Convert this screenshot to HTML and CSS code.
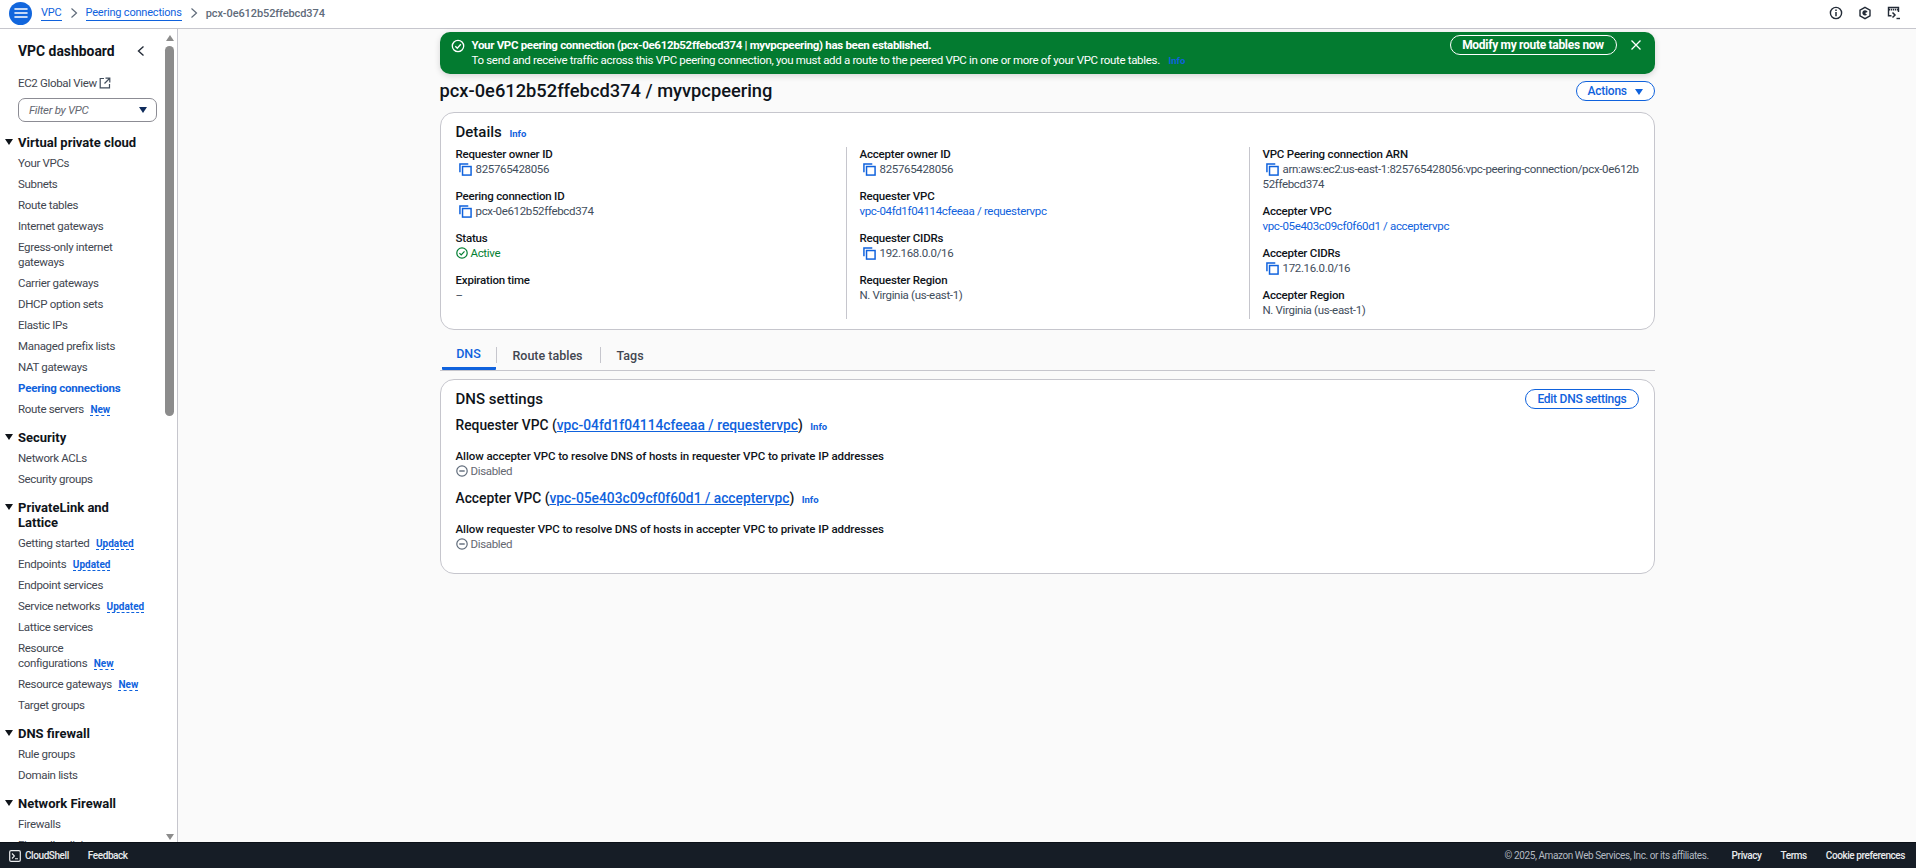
FILE: index.html
```html
<!DOCTYPE html>
<html lang="en">
<head>
<meta charset="utf-8">
<title>pcx-0e612b52ffebcd374 | VPC</title>
<link rel="stylesheet" href="styles.css">
</head>
<body>
<svg class="defs" width="0" height="0" aria-hidden="true">
  <symbol id="copy" viewBox="0 0 14 14"><path d="M1 10V1h9" fill="none" stroke="#0f62dd" stroke-width="1.6"/><rect x="3.8" y="3.8" width="9.2" height="9.2" fill="none" stroke="#0f62dd" stroke-width="1.6"/></symbol>
  <symbol id="minus" viewBox="0 0 12 12"><circle cx="6" cy="6" r="5.2" fill="none" stroke="#5f6b7a" stroke-width="1.2"/><path d="M3.3 6h5.4" stroke="#5f6b7a" stroke-width="1.4"/></symbol>
</svg>
<header class="topbar">
  <button class="menu-btn" aria-label="Menu"><svg viewBox="0 0 14 12" width="14" height="12"><path d="M1 2h12M1 6h12M1 10h12" stroke="#fff" stroke-width="1.6" stroke-linecap="round"/></svg></button>
  <nav class="crumbs">
    <a class="crumb-link" href="#">VPC</a>
    <svg class="crumb-sep" viewBox="0 0 8 12" width="8" height="12"><path d="M1.5 1.5 6.5 6l-5 4.5" fill="none" stroke="#5f6b7a" stroke-width="1.2"/></svg>
    <a class="crumb-link" href="#">Peering connections</a>
    <svg class="crumb-sep" viewBox="0 0 8 12" width="8" height="12"><path d="M1.5 1.5 6.5 6l-5 4.5" fill="none" stroke="#5f6b7a" stroke-width="1.2"/></svg>
    <span class="crumb-current">pcx-0e612b52ffebcd374</span>
  </nav>
  <div class="top-icons">
    <svg viewBox="0 0 14 14" width="14" height="14"><circle cx="7" cy="7" r="5.6" fill="none" stroke="#232b37" stroke-width="1.4"/><path d="M7 6v4.2M7 3.4v1.5" stroke="#232b37" stroke-width="1.5"/></svg>
    <svg viewBox="0 0 14 14" width="14" height="14"><path d="M7 1.4 12 4.2v5.6L7 12.6 2 9.8V4.2Z" fill="none" stroke="#232b37" stroke-width="1.4"/><path d="M7 7 9.6 6A2.7 2.7 0 1 0 9 8.8Z" fill="#232b37"/></svg>
    <svg viewBox="0 0 14 14" width="14" height="14"><path d="M4.5 9.8H1.5V1.5h10V6" fill="none" stroke="#232b37" stroke-width="1.4"/><path d="M2 3.6h9" stroke="#232b37" stroke-width="1.6" stroke-dasharray="1.3 .7"/><path d="M5.5 6.5 8 9l-2.5 2.5" fill="none" stroke="#232b37" stroke-width="1.5"/><path d="M9.5 12.5H13" stroke="#232b37" stroke-width="1.4"/></svg>
  </div>
</header>
<div class="shell">
  <aside class="sidebar">
    <div class="side-inner">
      <div class="side-head">
        <h2 class="side-title">VPC dashboard</h2>
        <svg viewBox="0 0 8 12" width="8" height="12"><path d="M6.5 1.5 1.5 6l5 4.5" fill="none" stroke="#232b37" stroke-width="1.4"/></svg>
      </div>
      <a class="side-link global" href="#">EC2 Global View <svg viewBox="0 0 12 12" width="12" height="12"><path d="M5 1.5H1.2v9.3h9.3V7" fill="none" stroke="#414d5c" stroke-width="1.2"/><path d="M6.5 1.2h4.3v4.3M10.5 1.5 5.5 6.5" fill="none" stroke="#414d5c" stroke-width="1.2"/></svg></a>
      <div class="filter"><span>Filter by VPC</span><i class="caret navy"></i></div>

      <h3 class="sec"><i class="caret dark"></i>Virtual private cloud</h3>
      <a class="side-link" href="#">Your VPCs</a>
      <a class="side-link" href="#">Subnets</a>
      <a class="side-link" href="#">Route tables</a>
      <a class="side-link" href="#">Internet gateways</a>
      <a class="side-link" href="#">Egress-only internet<br>gateways</a>
      <a class="side-link" href="#">Carrier gateways</a>
      <a class="side-link" href="#">DHCP option sets</a>
      <a class="side-link" href="#">Elastic IPs</a>
      <a class="side-link" href="#">Managed prefix lists</a>
      <a class="side-link" href="#">NAT gateways</a>
      <a class="side-link active" href="#">Peering connections</a>
      <a class="side-link" href="#">Route servers <b class="tag">New</b></a>

      <h3 class="sec"><i class="caret dark"></i>Security</h3>
      <a class="side-link" href="#">Network ACLs</a>
      <a class="side-link" href="#">Security groups</a>

      <h3 class="sec"><i class="caret dark"></i>PrivateLink and<br>Lattice</h3>
      <a class="side-link" href="#">Getting started <b class="tag">Updated</b></a>
      <a class="side-link" href="#">Endpoints <b class="tag">Updated</b></a>
      <a class="side-link" href="#">Endpoint services</a>
      <a class="side-link" href="#">Service networks <b class="tag">Updated</b></a>
      <a class="side-link" href="#">Lattice services</a>
      <a class="side-link" href="#">Resource<br>configurations <b class="tag">New</b></a>
      <a class="side-link" href="#">Resource gateways <b class="tag">New</b></a>
      <a class="side-link" href="#">Target groups</a>

      <h3 class="sec"><i class="caret dark"></i>DNS firewall</h3>
      <a class="side-link" href="#">Rule groups</a>
      <a class="side-link" href="#">Domain lists</a>

      <h3 class="sec"><i class="caret dark"></i>Network Firewall</h3>
      <a class="side-link" href="#">Firewalls</a>
      <a class="side-link" href="#">Firewall policies</a>
    </div>
    <div class="scrollbar">
      <i class="sb-arrow up"></i>
      <div class="sb-thumb"></div>
      <i class="sb-arrow down"></i>
    </div>
  </aside>
  <main class="main">
    <div class="content">
      <section class="banner">
        <svg class="banner-icon" viewBox="0 0 14 14" width="14" height="14"><circle cx="7" cy="7" r="5.7" fill="none" stroke="#fff" stroke-width="1.3"/><path d="M4.3 7.2 6.3 9.2 9.8 5.2" fill="none" stroke="#fff" stroke-width="1.3"/></svg>
        <div class="banner-text">
          <strong>Your VPC peering connection (pcx-0e612b52ffebcd374 | myvpcpeering) has been established.</strong>
          <span>To send and receive traffic across this VPC peering connection, you must add a route to the peered VPC in one or more of your VPC route tables. <a class="info banner-info" href="#">Info</a></span>
        </div>
        <button class="banner-btn">Modify my route tables now</button>
        <svg class="banner-close" viewBox="0 0 12 12" width="12" height="12"><path d="M1.5 1.5l9 9M10.5 1.5l-9 9" stroke="#fff" stroke-width="1.3"/></svg>
      </section>

      <div class="title-row">
        <h1 class="page-title">pcx-0e612b52ffebcd374 / myvpcpeering</h1>
        <button class="btn">Actions <i class="caret blue"></i></button>
      </div>

      <section class="card details">
        <h2 class="card-title">Details <a class="info" href="#">Info</a></h2>
        <div class="cols">
          <div class="col">
            <dl class="kv"><dt>Requester owner ID</dt><dd><svg class="copy"><use href="#copy"/></svg>825765428056</dd></dl>
            <dl class="kv"><dt>Peering connection ID</dt><dd><svg class="copy"><use href="#copy"/></svg>pcx-0e612b52ffebcd374</dd></dl>
            <dl class="kv"><dt>Status</dt><dd class="ok"><svg class="status-icon" viewBox="0 0 12 12"><circle cx="6" cy="6" r="5.2" fill="none" stroke="#037f33" stroke-width="1.2"/><path d="M3.4 6.2 5.2 8l3.3-3.7" fill="none" stroke="#037f33" stroke-width="1.2"/></svg>Active</dd></dl>
            <dl class="kv"><dt>Expiration time</dt><dd>–</dd></dl>
          </div>
          <div class="col ruled">
            <dl class="kv"><dt>Accepter owner ID</dt><dd><svg class="copy"><use href="#copy"/></svg>825765428056</dd></dl>
            <dl class="kv"><dt>Requester VPC</dt><dd><a class="link" href="#">vpc-04fd1f04114cfeeaa / requestervpc</a></dd></dl>
            <dl class="kv"><dt>Requester CIDRs</dt><dd><svg class="copy"><use href="#copy"/></svg>192.168.0.0/16</dd></dl>
            <dl class="kv"><dt>Requester Region</dt><dd>N. Virginia (us-east-1)</dd></dl>
          </div>
          <div class="col ruled">
            <dl class="kv"><dt>VPC Peering connection ARN</dt><dd><svg class="copy"><use href="#copy"/></svg>arn:aws:ec2:us-east-1:825765428056:vpc-peering-connection/pcx-0e612b<br>52ffebcd374</dd></dl>
            <dl class="kv"><dt>Accepter VPC</dt><dd><a class="link" href="#">vpc-05e403c09cf0f60d1 / acceptervpc</a></dd></dl>
            <dl class="kv"><dt>Accepter CIDRs</dt><dd><svg class="copy"><use href="#copy"/></svg>172.16.0.0/16</dd></dl>
            <dl class="kv"><dt>Accepter Region</dt><dd>N. Virginia (us-east-1)</dd></dl>
          </div>
        </div>
      </section>

      <div class="tabs">
        <a class="tab on" href="#">DNS</a>
        <a class="tab" href="#">Route tables</a>
        <a class="tab last" href="#">Tags</a>
      </div>

      <section class="card dns">
        <div class="dns-head">
          <h2 class="card-title">DNS settings</h2>
          <button class="btn">Edit DNS settings</button>
        </div>
        <h3 class="dns-sub">Requester VPC (<a href="#">vpc-04fd1f04114cfeeaa / requestervpc</a>) <a class="info" href="#">Info</a></h3>
        <dl class="kv dns-kv"><dt>Allow accepter VPC to resolve DNS of hosts in requester VPC to private IP addresses</dt><dd class="off"><svg class="status-icon"><use href="#minus"/></svg>Disabled</dd></dl>
        <h3 class="dns-sub">Accepter VPC (<a href="#">vpc-05e403c09cf0f60d1 / acceptervpc</a>) <a class="info" href="#">Info</a></h3>
        <dl class="kv dns-kv"><dt>Allow requester VPC to resolve DNS of hosts in accepter VPC to private IP addresses</dt><dd class="off"><svg class="status-icon"><use href="#minus"/></svg>Disabled</dd></dl>
      </section>
    </div>
  </main>
</div>
<footer class="footer">
  <svg viewBox="0 0 12 12" width="12" height="12"><rect x=".7" y=".7" width="10.6" height="10.6" rx="1.4" fill="none" stroke="#e9ebed" stroke-width="1.2"/><path d="M3 3.5 5.4 6 3 8.5M6 8.8h3" fill="none" stroke="#e9ebed" stroke-width="1.1"/></svg>
  <a class="foot-link cloud" href="#">CloudShell</a>
  <a class="foot-link" href="#">Feedback</a>
  <span class="copyright">© 2025, Amazon Web Services, Inc. or its affiliates.</span>
  <a class="foot-link" href="#">Privacy</a>
  <a class="foot-link" href="#">Terms</a>
  <a class="foot-link" href="#">Cookie preferences</a>
</footer>
</body>
</html>
```
FILE: styles.css
```css
* { box-sizing: border-box; }
html, body { height: 100%; }
body {
  margin: 0;
  height: 868px;
  overflow: hidden;
  display: flex;
  flex-direction: column;
  background: #fafafa;
  color: #0f141a;
  font: 11.5px/15px Roboto, "Liberation Sans", sans-serif;
}
a { text-decoration: none; color: inherit; }
h1, h2, h3, dl, dd { margin: 0; }
button { font: inherit; cursor: pointer; }
.defs { position: absolute; }

/* top bar */
.topbar {
  flex: none;
  height: 29px;
  display: flex;
  align-items: center;
  background: #fff;
  border-bottom: 1px solid #c6c6cd;
  padding: 0 15px 2px 9px;
}
.menu-btn {
  width: 23px; height: 23px;
  padding: 0;
  border: 0;
  border-radius: 50%;
  background: #1166dd;
  display: flex; align-items: center; justify-content: center;
}
.crumbs { display: flex; align-items: center; margin-left: 9px; gap: 8px; font-size: 11px; }
.crumb-link { color: #0f62dd; border-bottom: 1px solid #0f62dd; line-height: 15px; letter-spacing: -.2px; }
.crumb-current { color: #5f6b7a; font-weight: 500; letter-spacing: -.1px; }
.top-icons { margin-left: auto; display: flex; gap: 15px; }

/* layout */
.shell { flex: 1; min-height: 0; display: flex; }

/* sidebar */
.sidebar {
  flex: none;
  width: 178px;
  display: flex;
  background: #fff;
  border-right: 1px solid #c6c6cd;
  overflow: hidden;
}
.side-inner { flex: 1; min-width: 0; padding: 0 0 0 18px; overflow: hidden; }
.side-head { display: flex; align-items: center; justify-content: space-between; padding: 0 20px 0 0; height: 44px; }
.side-title { font-size: 13.9px; line-height: 18px; font-weight: 700; color: #0f141a; }
.side-link { display: block; padding: 3px 0; line-height: 15px; color: #424650; font-size: 11.5px; letter-spacing: -.33px; white-space: nowrap; }
.side-link.global svg { vertical-align: -2px; }
.side-link.active { color: #0f62dd; font-weight: 700; letter-spacing: -.2px; }
.tag {
  margin-left: 4px;
  font-size: 10px;
  line-height: 10px;
  font-weight: 700;
  letter-spacing: 0;
  color: #0f62dd;
  border-bottom: 1px dashed #0f62dd;
}
.filter {
  width: 139px;
  height: 24px;
  margin-top: 4px;
  padding: 0 9px 0 10px;
  border: 1px solid #8c8c94;
  border-radius: 7px;
  display: flex; align-items: center; justify-content: space-between;
  font-style: italic;
  letter-spacing: -.3px;
  color: #656871;
}
.caret { display: inline-block; width: 0; height: 0; border-style: solid; border-width: 5px 4px 0; border-color: transparent; }
.caret.navy { border-top-color: #0f2c5c; border-width: 6px 4px 0; }
.caret.dark { border-top-color: #0f141a; }
.caret.blue { border-top-color: #0f62dd; }
.sec {
  position: relative;
  margin-top: 7px;
  padding: 3px 0;
  font-size: 13px;
  line-height: 15px;
  font-weight: 700;
  color: #0f141a;
}
.sec .caret { position: absolute; left: -13px; top: 7px; border-width: 6px 4px 0; }
.filter + .sec { margin-top: 10px; }
.scrollbar {
  flex: none;
  width: 12px;
  padding: 6px 3px 0 0;
  display: flex;
  flex-direction: column;
  align-items: center;
  background: #fff;
}
.sb-thumb { width: 9px; height: 370px; margin-top: 5px; border-radius: 5px; background: #8c8c8c; }
.sb-arrow { width: 0; height: 0; border-left: 4.5px solid transparent; border-right: 4.5px solid transparent; }
.sb-arrow.up { border-bottom: 6px solid #8c8c8c; }
.sb-arrow.down { margin-top: auto; margin-bottom: 2px; border-top: 6px solid #8c8c8c; }

/* main */
.main { flex: 1; min-width: 0; padding-top: 3px; }
.content { width: 1215px; margin: 0 auto; }

.banner {
  height: 42px;
  display: flex;
  align-items: flex-start;
  padding: 6px 13px 0 11px;
  border-radius: 10px;
  background: #037b30;
  box-shadow: 0 2px 6px rgba(0,0,0,.15);
  color: #fff;
  letter-spacing: -.32px;
}
.banner-icon { margin-top: 1px; flex: none; }
.banner-text { margin-left: 7px; flex: 1; display: flex; flex-direction: column; }
.banner-text strong { font-weight: 700; }
.banner-info { color: #0f62dd; margin-left: 6px; }
.banner-btn {
  margin-top: -3px;
  height: 20px;
  width: 167px;
  padding: 0;
  border: 1px solid #fff;
  border-radius: 10px;
  background: transparent;
  color: #fff;
  font-size: 12px;
  font-weight: 700;
  letter-spacing: -.3px;
}
.banner-close { margin: 1px 0 0 13px; }

.title-row { height: 38px; padding-bottom: 4px; display: flex; align-items: center; justify-content: space-between; }
.page-title { font-size: 18.3px; line-height: 24px; font-weight: 500; color: #0f141a; }
.btn {
  height: 20px;
  padding: 0 11px;
  border: 1px solid #0f62dd;
  border-radius: 10px;
  background: #fff;
  color: #0f62dd;
  font-size: 12px;
  font-weight: 500;
  letter-spacing: -.25px;
}
.btn .caret { margin-left: 5px; border-width: 6px 4px 0; }

.card {
  background: #fff;
  border: 1px solid #c6c6cd;
  border-radius: 14px;
}
.details { height: 218px; padding: 10px 15px 0; }
.card-title { font-size: 15px; line-height: 18px; font-weight: 500; color: #0f141a; }
.info { font-size: 9.5px; font-weight: 700; color: #0f62dd; letter-spacing: 0; }
.card-title .info { margin-left: 4px; }
.cols { display: grid; grid-template-columns: 390px 403px 1fr; margin-top: 4px; height: 172px; }
.col.ruled { border-left: 1px solid #c6c6cd; padding-left: 13px; }
.kv { margin-bottom: 12px; }
.kv:last-child { margin-bottom: 0; }
.kv dt { font-weight: 500; color: #0f141a; line-height: 15px; letter-spacing: -.2px; }
.kv dd { color: #414d5c; line-height: 15px; letter-spacing: -.33px; white-space: nowrap; }
.copy { width: 13px; height: 13px; margin: 0 4px 0 3px; vertical-align: -3px; }
.status-icon { width: 12px; height: 12px; margin-right: 3px; vertical-align: -2px; }
.ok { color: #037f33 !important; }
.off { color: #656871 !important; }
.link { color: #0f62dd; }

.tabs { display: flex; height: 41px; padding: 10px 0 0 2px; margin-top: 0; border-bottom: 1px solid #c6c6cd; }
.tab {
  width: 54px;
  height: 30px;
  display: flex; align-items: center; justify-content: center;
  font-size: 12.5px;
  font-weight: 500;
  color: #424650;
  position: relative;
}
.tab.on { color: #0f62dd; border-bottom: 3px solid #0f62dd; border-radius: 1px; }
.tab + .tab { width: 104px; }
.tab + .tab::before { content: ""; position: absolute; left: 0; top: 7px; height: 16px; border-left: 1px solid #c6c6cd; }
.tab.last { width: 75px; justify-content: flex-start; padding-left: 17px; }

.dns { margin-top: 8px; height: 195px; padding: 9px 15px 0; }
.dns-head { display: flex; align-items: center; justify-content: space-between; height: 20px; }
.dns-sub { margin-top: 7px; font-size: 13.8px; line-height: 18px; font-weight: 500; color: #0f141a; }
.dns-sub > a:first-child { color: #0f62dd; text-decoration: underline; }
.dns-sub .info { margin-left: 4px; }
.dns-kv { margin-top: 13px; margin-bottom: 10px; }
.dns-kv:last-child { margin-bottom: 0; }
.dns-kv dt { letter-spacing: -.08px; }
.dns-kv + .dns-sub { margin-top: 0; }

/* footer */
.footer {
  flex: none;
  height: 26px;
  display: flex;
  align-items: center;
  gap: 19px;
  padding: 0 11px 0 9px;
  background: #161d26;
  border-top: 1px solid #0b1017;
  font-size: 10px;
  letter-spacing: -.42px;
  color: #e9ebed;
}
.foot-link { font-weight: 500; color: #e9ebed; }
.cloud { margin-left: -15px; }
.copyright { margin-left: auto; margin-right: 4px; color: #b4bac2; }
```
